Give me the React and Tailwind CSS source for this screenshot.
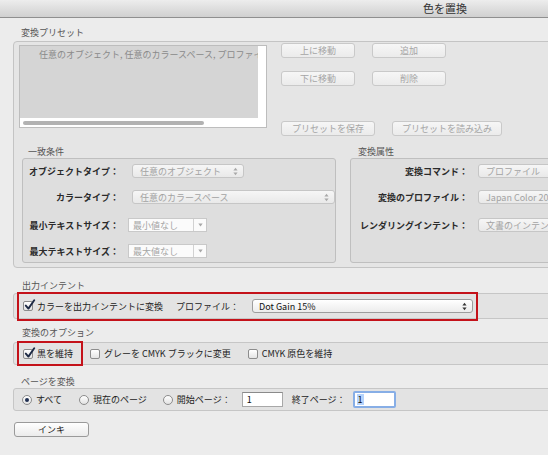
import React from "react";

function UpDown({ color = "#a8a8a8" }) {
  return (
    <svg width="5" height="9" viewBox="0 0 5 9" className="shrink-0">
      <path d="M2.5 0.8 L4.6 3.4 L0.4 3.4 Z" fill={color} />
      <path d="M2.5 8.2 L4.6 5.6 L0.4 5.6 Z" fill={color} />
    </svg>
  );
}

function Down() {
  return (
    <svg width="5" height="4" viewBox="0 0 5 4">
      <path d="M0.3 0.5 L4.7 0.5 L2.5 3.6 Z" fill="#a8a8a8" />
    </svg>
  );
}

function Btn({ className, children }) {
  return (
    <div
      className={
        "h-[15px] rounded-[3px] border border-[#c9c9c9] bg-gradient-to-b from-[#f6f6f6] to-[#ebebeb] flex items-center justify-center text-[#a5a5a5] whitespace-nowrap " +
        className
      }
    >
      {children}
    </div>
  );
}

function Check({ checked }) {
  return (
    <div className="relative w-[10px] h-[10px] shrink-0 rounded-[2px] border border-[#8c8c8c] bg-gradient-to-b from-white to-[#e4e4e4]">
      {checked && (
        <svg className="absolute left-[0px] top-[-3px]" width="12" height="12" viewBox="0 0 12 12">
          <path d="M1.8 6.6 L4.4 9.6 L10.2 1.2" stroke="#1d2a45" strokeWidth="1.9" fill="none" strokeLinecap="round" strokeLinejoin="round" />
        </svg>
      )}
    </div>
  );
}

function Radio({ on }) {
  return (
    <div className="w-[10px] h-[10px] shrink-0 rounded-full border border-[#8c8c8c] bg-gradient-to-b from-white to-[#e2e2e2] flex items-center justify-center">
      {on && <div className="w-[4px] h-[4px] rounded-full bg-[#1f2f52]" />}
    </div>
  );
}

function GroupTitle({ className, children }) {
  return <div className={"h-[12px] leading-[12px] text-[#555] whitespace-nowrap " + className}>{children}</div>;
}

function DisabledSelect({ className, children }) {
  return (
    <div
      className={
        "h-[14px] rounded-[3px] border border-[#c6c6c6] bg-gradient-to-b from-[#f6f6f6] to-[#e9e9e9] flex items-center pl-[7px] pr-[5px] text-[#a3a3a3] font-normal whitespace-nowrap overflow-hidden " +
        className
      }
    >
      <span className="flex-1">{children}</span>
      <UpDown />
    </div>
  );
}

function Combo({ children }) {
  return (
    <div className="ml-[9px] w-[79px] h-[14px] flex border border-[#c9c9c9] bg-[#fbfbfb] font-normal">
      <div className="flex-1 pl-[4px] flex items-center text-[#a5a5a5]">{children}</div>
      <div className="w-[13px] border-l border-[#d2d2d2] flex items-center justify-center">
        <Down />
      </div>
    </div>
  );
}

export default function App() {
  return (
    <div className="w-[548px] h-[455px] overflow-hidden bg-[#ececec] font-['Noto_Sans_CJK_JP',sans-serif] text-[9px] text-[#222] leading-none">
      <div className="h-[18px] border-b border-[#8f8f8f] bg-gradient-to-b from-[#ededed] to-[#d0d0d0] pl-[423px] flex items-center text-[11px] text-[#333]">
        色を置換
      </div>

      <div className="w-[580px]">
        <GroupTitle className="mt-[9px] ml-[21px]">変換プリセット</GroupTitle>

        <div className="mt-[2px] ml-[13px] h-[227px] border border-[#c4c4c4] rounded-[4px] bg-[#e5e5e5] pt-[1px] pl-[5px]">
          <div className="flex items-start">
            <div className="mt-[2px] w-[248px] h-[83px] border border-[#bdbdbd] bg-white flex flex-col">
              <div className="flex-1 mr-[8px] bg-[#d5d5d5] pl-[19px] pt-[4px] text-[#8a8a8a] whitespace-nowrap overflow-hidden">
                任意のオブジェクト, 任意のカラースペース, プロファイル
              </div>
              <div className="h-[9px] flex items-center px-[3px]">
                <div className="h-[4px] w-[181px] rounded-full bg-[#b2b2b2]" />
              </div>
            </div>

            <div className="ml-[14px] flex flex-col">
              <div className="flex gap-[17px]">
                <Btn className="w-[74px]">上に移動</Btn>
                <Btn className="w-[74px]">追加</Btn>
              </div>
              <div className="flex gap-[17px] mt-[13px]">
                <Btn className="w-[74px]">下に移動</Btn>
                <Btn className="w-[74px]">削除</Btn>
              </div>
              <div className="flex gap-[17px] mt-[35px]">
                <Btn className="w-[94px]">プリセットを保存</Btn>
                <Btn className="w-[110px]">プリセットを読み込み</Btn>
              </div>
            </div>
          </div>

          <div className="flex mt-[10px]">
            <div className="ml-[3px] w-[323px]">
              <GroupTitle className="pl-[6px]">一致条件</GroupTitle>
              <div className="h-[105px] border border-[#bfbfbf] rounded-[3px] bg-[#dedede] font-bold text-[#2a2a2a]">
                <div className="mt-[5px] h-[14px] flex items-center">
                  <div className="w-[96px] text-right whitespace-nowrap">オブジェクトタイプ：</div>
                  <DisabledSelect className="ml-[13px] w-[112px]">任意のオブジェクト</DisabledSelect>
                </div>
                <div className="mt-[12px] h-[14px] flex items-center">
                  <div className="w-[96px] text-right whitespace-nowrap">カラータイプ：</div>
                  <DisabledSelect className="ml-[13px] w-[203px]">任意のカラースペース</DisabledSelect>
                </div>
                <div className="mt-[14px] h-[14px] flex items-center">
                  <div className="w-[96px] text-right whitespace-nowrap">最小テキストサイズ：</div>
                  <Combo>最小値なし</Combo>
                </div>
                <div className="mt-[12px] h-[14px] flex items-center">
                  <div className="w-[96px] text-right whitespace-nowrap">最大テキストサイズ：</div>
                  <Combo>最大値なし</Combo>
                </div>
              </div>
            </div>

            <div className="ml-[14px] flex-1">
              <GroupTitle className="pl-[8px]">変換属性</GroupTitle>
              <div className="h-[105px] border border-[#bfbfbf] rounded-[3px] bg-[#dedede] font-bold text-[#2a2a2a]">
                <div className="mt-[5px] h-[14px] flex items-center">
                  <div className="w-[117px] text-right whitespace-nowrap">変換コマンド：</div>
                  <DisabledSelect className="ml-[10px] w-[120px]">プロファイル</DisabledSelect>
                </div>
                <div className="mt-[12px] h-[14px] flex items-center">
                  <div className="w-[117px] text-right whitespace-nowrap">変換のプロファイル：</div>
                  <DisabledSelect className="ml-[10px] w-[120px]">Japan Color 2001</DisabledSelect>
                </div>
                <div className="mt-[14px] h-[14px] flex items-center">
                  <div className="w-[117px] text-right whitespace-nowrap">レンダリングインテント：</div>
                  <DisabledSelect className="ml-[10px] w-[120px]">文書のインテント</DisabledSelect>
                </div>
              </div>
            </div>
          </div>
        </div>

        <GroupTitle className="mt-[12px] ml-[22px]">出力インテント</GroupTitle>
        <div className="relative mt-[1px] ml-[13px] h-[26px] border border-[#c6c6c6] rounded-[3px] bg-[#e3e3e3] flex items-center pl-[9px] whitespace-nowrap">
          <Check checked />
          <span className="ml-[4px]">カラーを出力インテントに変換</span>
          <span className="ml-[13px]">プロファイル：</span>
          <div className="ml-[13px] w-[221px] h-[14px] rounded-[3px] border border-[#9d9d9d] bg-gradient-to-b from-white to-[#ececec] flex items-center pl-[6px] pr-[5px] text-[#111]">
            <span className="flex-1">Dot Gain 15%</span>
            <UpDown color="#333" />
          </div>
          <div className="absolute left-[3px] top-[-2px] w-[461px] h-[29px] border-2 border-[#c4121a]" />
        </div>

        <GroupTitle className="mt-[8px] ml-[22px]">変換のオプション</GroupTitle>
        <div className="relative mt-[3px] ml-[13px] h-[23px] border border-[#c6c6c6] rounded-[3px] bg-[#e3e3e3] flex items-center pl-[9px] whitespace-nowrap">
          <Check checked />
          <span className="ml-[4px]">黒を維持</span>
          <div className="ml-[17px]">
            <Check />
          </div>
          <span className="ml-[4px]">グレーを CMYK ブラックに変更</span>
          <div className="ml-[17px]">
            <Check />
          </div>
          <span className="ml-[4px]">CMYK 原色を維持</span>
          <div className="absolute left-[3px] top-[-2px] w-[66px] h-[25px] border-2 border-[#c4121a]" />
        </div>

        <GroupTitle className="mt-[11px] ml-[21px]">ページを変換</GroupTitle>
        <div className="ml-[13px] h-[23px] border border-[#c6c6c6] rounded-[3px] bg-[#e3e3e3] flex items-center pl-[8px] whitespace-nowrap">
          <Radio on />
          <span className="ml-[4px]">すべて</span>
          <div className="ml-[17px]">
            <Radio />
          </div>
          <span className="ml-[4px]">現在のページ</span>
          <div className="ml-[16px]">
            <Radio />
          </div>
          <span className="ml-[4px]">開始ページ：</span>
          <div className="ml-[11px] w-[41px] h-[15px] border border-[#a8a8a8] border-t-[#8a8a8a] bg-white pl-[4px] flex items-center text-[#111]">
            1
          </div>
          <span className="ml-[9px]">終了ページ：</span>
          <div className="ml-[7px] w-[43px] h-[17px] rounded-[2px] border-2 border-[#87aee6] bg-white pl-[2px] flex items-center text-[#111]">
            <span className="bg-[#b5d3fc] px-[1px] h-[11px] flex items-center">1</span>
          </div>
        </div>

        <div className="mt-[11px] ml-[14px] w-[75px] h-[15px] rounded-[3px] border border-[#9a9a9a] bg-gradient-to-b from-white to-[#ebebeb] flex items-center justify-center text-[#222]">
          インキ
        </div>
      </div>
    </div>
  );
}
